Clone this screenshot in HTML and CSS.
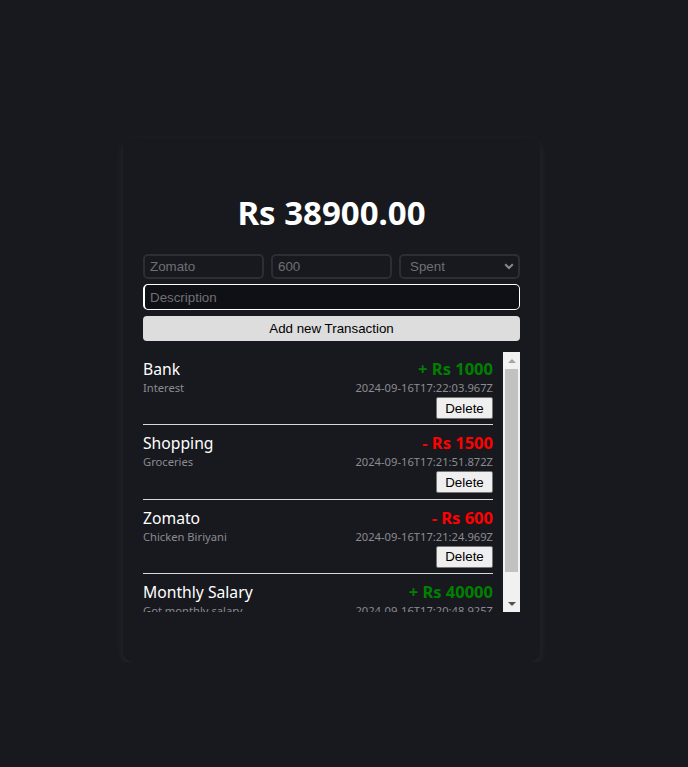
FILE: index.html
```html
<!DOCTYPE html>
<html lang="en">
<head>
<meta charset="utf-8">
<title>Expense Tracker</title>
<link rel="stylesheet" href="styles.css">
</head>
<body>
<div class="page">
  <div class="card">
    <h1 class="balance">Rs 38900.00</h1>
    <div class="row">
      <input class="field" type="text" placeholder="Zomato">
      <input class="field" type="text" placeholder="600">
      <div class="select-wrap">
        <select class="field select">
          <option>Spent</option>
          <option>Received</option>
        </select>
        <svg class="chev" width="10" height="7" viewBox="0 0 10 7"><path d="M1.2 1.2 L5 5 L8.8 1.2" fill="none" stroke="#8a8a8a" stroke-width="2"/></svg>
      </div>
    </div>
    <input class="field desc" type="text" placeholder="Description">
    <button class="add">Add new Transaction</button>
    <div class="list-wrap">
      <div class="list">
        <div class="item">
          <div class="left">
            <div class="title">Bank</div>
            <div class="sub">Interest</div>
          </div>
          <div class="right">
            <div class="amt plus">+ Rs 1000</div>
            <div class="sub">2024-09-16T17:22:03.967Z</div>
            <button class="del">Delete</button>
          </div>
        </div>
        <div class="item">
          <div class="left">
            <div class="title">Shopping</div>
            <div class="sub">Groceries</div>
          </div>
          <div class="right">
            <div class="amt minus">- Rs 1500</div>
            <div class="sub">2024-09-16T17:21:51.872Z</div>
            <button class="del">Delete</button>
          </div>
        </div>
        <div class="item">
          <div class="left">
            <div class="title">Zomato</div>
            <div class="sub">Chicken Biriyani</div>
          </div>
          <div class="right">
            <div class="amt minus">- Rs 600</div>
            <div class="sub">2024-09-16T17:21:24.969Z</div>
            <button class="del">Delete</button>
          </div>
        </div>
        <div class="item">
          <div class="left">
            <div class="title">Monthly Salary</div>
            <div class="sub">Got monthly salary</div>
          </div>
          <div class="right">
            <div class="amt plus">+ Rs 40000</div>
            <div class="sub">2024-09-16T17:20:48.925Z</div>
            <button class="del">Delete</button>
          </div>
        </div>
      </div>
      <div class="scrollbar">
        <div class="arrow up"></div>
        <div class="track"><div class="thumb"></div></div>
        <div class="arrow down"></div>
      </div>
    </div>
  </div>
</div>
</body>
</html>
```
FILE: styles.css
```css
html, body {
  margin: 0;
  padding: 0;
  background: #18191f;
}
body {
  font-family: "Noto Sans", "Open Sans", sans-serif;
  color: #ffffff;
}
.page {
  padding: 138px 0 0 123px;
}
.card {
  box-sizing: border-box;
  width: 417px;
  height: 524px;
  padding: 40px 20px 0 20px;
  background: #18191f;
  border-radius: 10px;
  box-shadow: 0 3px 10px rgba(255, 255, 255, 0.07);
}
.balance {
  margin: 0 0 6px 0;
  text-align: center;
  font-size: 33px;
  line-height: 70px;
  font-weight: 700;
  color: #ffffff;
}
.row {
  display: grid;
  grid-template-columns: 1fr 1fr 1fr;
  gap: 7px;
}
.field {
  box-sizing: border-box;
  height: 25px;
  background: #18191f;
  border: 2px solid #2d2e34;
  border-radius: 5px;
  color: #ffffff;
  font-family: "Liberation Sans", Arial, sans-serif;
  font-size: 13.33px;
  padding: 0 5px;
  outline: none;
}
.field::placeholder {
  color: #6f6f74;
}
.row .field {
  min-width: 0;
  width: 100%;
}
.select-wrap {
  position: relative;
  display: flex;
  min-width: 0;
}
.select {
  appearance: none;
  -webkit-appearance: none;
  color: #6f6f74;
  padding-left: 9px;
}
.chev {
  position: absolute;
  right: 6px;
  top: 9px;
}
.desc {
  display: block;
  width: 100%;
  margin-top: 5px;
  height: 26px;
  border: 1px solid #ffffff;
  border-left-width: 2px;
  border-radius: 5px;
  background: #0f1015;
  padding-left: 5px;
}
.add {
  display: block;
  width: 100%;
  height: 25px;
  margin-top: 6px;
  border: none;
  border-radius: 4px;
  background: #dddddd;
  color: #000000;
  font-family: "Liberation Sans", Arial, sans-serif;
  font-size: 13.33px;
}
.list-wrap {
  display: flex;
  margin-top: 11px;
  height: 260px;
}
.list {
  flex: 1;
  overflow: hidden;
  padding-right: 10px;
}
.item {
  box-sizing: border-box;
  display: flex;
  justify-content: space-between;
  border-bottom: 1px solid #d8d8d8;
  padding: 7px 0 0 0;
  height: 74.5px;
}
.item:first-child {
  padding-top: 6px;
  height: 73px;
}
.title {
  font-size: 15.7px;
  line-height: 22px;
  color: #ffffff;
}
.sub {
  font-size: 11.2px;
  line-height: 16px;
  color: #8b8b90;
}
.right {
  display: flex;
  flex-direction: column;
  align-items: flex-end;
}
.amt {
  font-size: 16.5px;
  line-height: 22px;
  font-weight: 700;
}
.plus { color: #008000; }
.minus { color: #ff0000; }
.del {
  margin-top: 1px;
  height: 22px;
  width: 57px;
  padding: 0;
  background: #efefef;
  border: 1px solid #767676;
  border-radius: 2px;
  color: #000000;
  font-family: "Liberation Sans", Arial, sans-serif;
  font-size: 13.33px;
}
.scrollbar {
  width: 17px;
  background: #f1f1f1;
  display: flex;
  flex-direction: column;
}
.arrow {
  height: 17px;
  display: flex;
  align-items: center;
  justify-content: center;
}
.arrow::before {
  content: "";
  width: 0;
  height: 0;
  border-left: 4px solid transparent;
  border-right: 4px solid transparent;
}
.up::before {
  border-bottom: 4px solid #a3a3a3;
}
.down::before {
  border-top: 4px solid #505050;
}
.track {
  flex: 1;
  padding: 0 2px;
}
.thumb {
  height: 203px;
  background: #c1c1c1;
}
```
